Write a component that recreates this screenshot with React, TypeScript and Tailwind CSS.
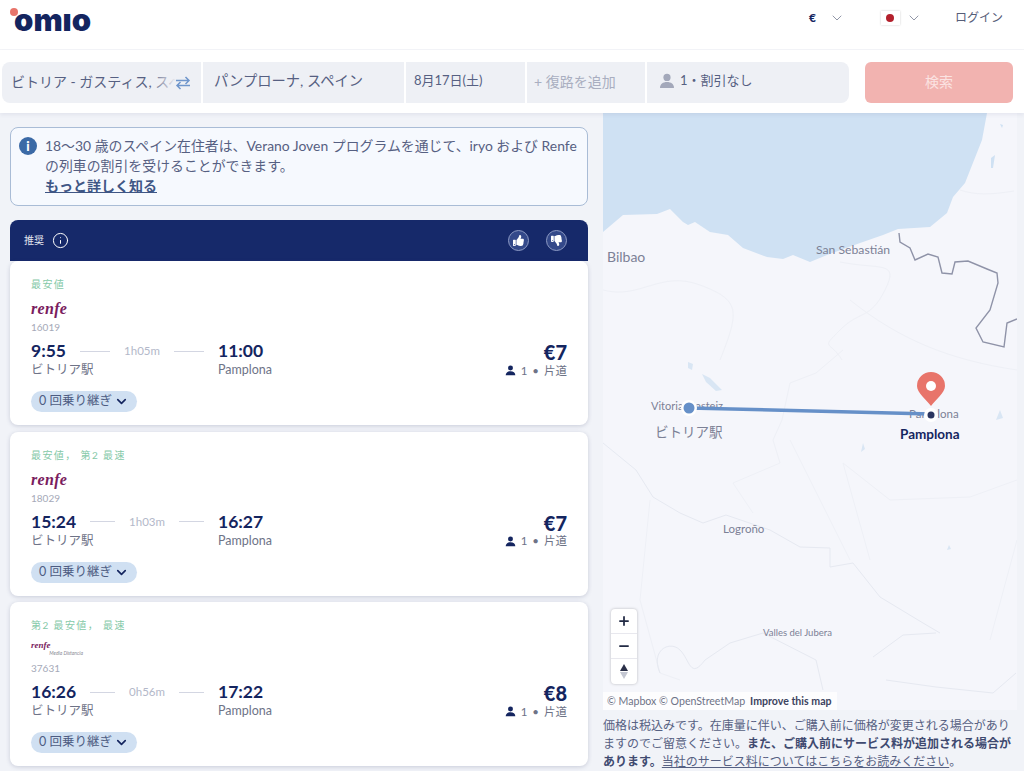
import React from "react";
import { ChevronDown, Info, Plus, Minus } from "lucide-react";
import { FaThumbsUp, FaThumbsDown } from "react-icons/fa";

const font = "[font-family:Lato,'Noto_Sans_CJK_JP',sans-serif]";

function Person({ className }: { className: string }) {
  return (
    <svg viewBox="0 0 16 16" className={className} fill="currentColor">
      <circle cx="8" cy="4.4" r="3.6" />
      <path d="M1 15c0-4 3-6 7-6s7 2 7 6z" />
    </svg>
  );
}

function Field({ w, children, className = "" }: { w: string; children: React.ReactNode; className?: string }) {
  return <div className={`${w} relative flex h-full shrink-0 items-center overflow-hidden bg-[#eef0f5] pb-[3px] ${className}`}>{children}</div>;
}

const cards = [
  { label: "最安値", no: "16019", dep: "9:55", dur: "1h05m", arr: "11:00", price: "€7", md: false },
  { label: "最安値， 第2 最速", no: "18029", dep: "15:24", dur: "1h03m", arr: "16:27", price: "€7", md: false },
  { label: "第2 最安値， 最速", no: "37631", dep: "16:26", dur: "0h56m", arr: "17:22", price: "€8", md: true },
];

function Card({ c }: { c: (typeof cards)[number] }) {
  return (
    <div className="flex h-[164px] flex-col rounded-lg bg-white pl-[21px] pr-[21px] pt-[16px] shadow-[0_1px_4px_rgba(60,70,110,0.22)]">
      <div className="h-[14px] text-[10px] leading-[14px] tracking-[1.4px] text-[#85c9a8]">{c.label}</div>
      <div className="mt-[7px] flex h-[22px] items-center">
        {c.md ? (
          <div className="relative flex h-full w-[52px] flex-col">
            <span className="text-[9px] font-bold italic leading-[12px] text-[#7a1c5e] [font-family:'Liberation_Serif',serif]">renfe</span>
            <span className="self-end text-[5px] italic leading-[5px] text-[#8a8a95]">Media Distancia</span>
          </div>
        ) : (
          <span className="text-[16px] font-bold italic leading-[22px] tracking-[0.3px] text-[#7a1c5e] [font-family:'Liberation_Serif',serif]">renfe</span>
        )}
      </div>
      <div className="mt-[1px] h-[13px] text-[10px] leading-[13px] text-[#a5a9b8]">{c.no}</div>
      <div className="mt-[6px] flex items-start justify-between">
        <div className="w-[250px]">
          <div className="flex h-[22px] items-center">
            <div className="flex w-[187px] items-center text-[11.5px] text-[#b3b8c9]">
              <span className="text-[17.5px] font-bold leading-[22px] text-[#14255f]">{c.dep}</span>
              <span className="mx-[14px] h-px min-w-0 flex-1 bg-[#d3d6e2]" />
              <span>{c.dur}</span>
              <span className="mx-[14px] h-px min-w-0 flex-1 bg-[#d3d6e2]" />
            </div>
            <span className="text-[17.5px] font-bold leading-[22px] text-[#14255f]">{c.arr}</span>
          </div>
          <div className="flex h-[15px] items-center text-[12.5px] leading-[15px] text-[#6e7387]">
            <span className="w-[187px]">ビトリア駅</span>
            <span>Pamplona</span>
          </div>
        </div>
        <div className="flex flex-col items-end pt-[1px]">
          <span className="text-[20px] font-black leading-[22px] text-[#14255f]">{c.price}</span>
          <div className="flex h-[15px] items-center gap-[5px] text-[11.5px] text-[#6e7387]">
            <Person className="h-[11px] w-[11px] text-[#14255f]" />
            <span>1</span>
            <span>•</span>
            <span>片道</span>
          </div>
        </div>
      </div>
      <div className="mt-[13px] flex h-[21px] w-[106px] items-center justify-center gap-[2px] rounded-full bg-[#d0e0f2] text-[12.5px] text-[#4d5c82]">
        <span>0 回乗り継ぎ</span>
        <ChevronDown className="h-[15px] w-[15px] text-[#14255f]" strokeWidth={2.6} />
      </div>
    </div>
  );
}

function MapArt() {
  const sans = "Lato, 'Noto Sans CJK JP', sans-serif";
  return (
    <svg viewBox="603 113 414 597" className="absolute inset-0 h-full w-full">
      <rect x="603" y="113" width="414" height="597" fill="#f5f6fb" />
      <path
        d="M603 113 L987 113 L982 140 L965 183 L953 197 L947 213 L930 227 L898 229 L883 235 L860 243 L827 255 L810 262 L793 255 L783 259 L767 257 L743 248 L728 235 L710 232 L695 222 L688 225 L683 222 L670 209 L657 214 L623 215 L603 232 Z"
        fill="#cfe1f3"
      />
      <g fill="none" stroke="#eef0f6" strokeWidth="1">
        <path d="M603 290 C640 300 660 270 700 285 S740 310 720 360" />
        <path d="M840 262 C880 270 900 260 885 290 S860 310 840 330 S830 340 842 360" />
        <path d="M843 350 L816 373 L790 383 L782 420 L773 440 L780 463 L733 483 L753 513" />
        <path d="M843 463 L890 500 L970 497 L1017 480 M843 463 L870 560 M790 440 L850 560" />
        <path d="M960 190 C975 195 990 195 1014 191 M850 300 C900 340 950 360 1017 370" />
        <path d="M650 500 L640 600 L660 673 L680 680 M1017 540 L990 640" />
      </g>
      <g fill="none" stroke="#e6e9f1" strokeWidth="1">
        <path d="M603 443 L636 470 L653 497 L680 513 L703 523 L726 515 L770 530 L800 547 L830 548 L830 567 L853 563 L880 597 L923 623 L940 633" />
        <path d="M660 673 C650 650 670 640 680 650 S690 680 705 660 L730 643 L763 633 L816 660 L823 690" />
        <path d="M873 657 L903 635 L936 633 M886 680 L936 687 L993 693 L1016 673" />
      </g>
      <path d="M702 374 L710 378 L722 390 L716 391 L706 382 Z M688 362 L693 364 L692 370 L688 368 Z M863 443 L865 449 L861 452 Z M1000 410 L1003 418 L996 420 Z M949 545 L951 549 L947 550 Z" fill="#d9e6f4" />
      <path d="M991 158 L995 155 L993 168 L991 168 Z M1000 124 l3 1 -1 3z" fill="#cfe1f3" />
      <path
        d="M899 233 L900 242 L910 248 L915 260 L928 254 L938 257 L942 273 L952 274 L955 262 L968 261 L987 269 L997 273 L998 283 L990 310 L976 328 L983 342 L1004 347 L1007 323 L1017 319"
        fill="none"
        stroke="#8f93a8"
        strokeWidth="1.4"
      />
      <g fontFamily={sans} fill="#7c8196">
        <text x="607" y="262" fontSize="14">Bilbao</text>
        <text x="816" y="254" fontSize="12.2">San Sebastián</text>
        <text x="723" y="533" fontSize="11.5">Logroño</text>
        <text x="763" y="636" fontSize="9.5">Valles del Jubera</text>
        <text x="651" y="410" fontSize="11">Vitoria-Gasteiz</text>
        <text x="909" y="418" fontSize="11.5">Pamplona</text>
        <text x="655" y="437" fontSize="13.5">ビトリア駅</text>
      </g>
      <text x="900" y="439" fontSize="13.5" fontWeight="700" fontFamily={sans} fill="#14255f">Pamplona</text>
      <line x1="689" y1="408" x2="931" y2="414" stroke="#6690c8" strokeWidth="3.5" />
      <circle cx="689" cy="408" r="8" fill="#ffffff" />
      <circle cx="689" cy="408" r="5.5" fill="#6690c8" />
      <circle cx="931" cy="415" r="7" fill="#ffffff" />
      <circle cx="931" cy="415" r="3.5" fill="#2b3660" />
      <path d="M931 406 C926 399 917 393 917 386 A14 14 0 0 1 945 386 C945 393 936 399 931 406 Z" fill="#e8746a" />
      <circle cx="931" cy="386" r="5" fill="#ffffff" />
    </svg>
  );
}

export default function App() {
  return (
    <div className={`${font} h-[771px] w-[1024px] overflow-hidden bg-[#f1f3f8]`}>
      <header className="flex h-[50px] items-start justify-between border-b border-[#f4f5f8] bg-white pl-[14px] pr-[21px]">
        <div className="relative h-[40px] w-[80px]">
          <span className="absolute left-0 top-0 text-[31px] font-black leading-[40px] text-[#14255f] [font-family:Inter,sans-serif]">omıo</span>
          <span className="absolute left-[-4px] top-[8px] h-[8px] w-[8px] rounded-full bg-[#e8746a]" />
        </div>
        <div className="flex h-[36px] items-center text-[#6a7088]">
          <span className="text-[12px] font-black text-[#14255f]">€</span>
          <ChevronDown className="ml-[13px] h-[16px] w-[16px]" strokeWidth={1.1} />
          <span className="ml-[36px] flex h-[14px] w-[19px] items-center justify-center bg-white shadow-[0_0_2px_rgba(0,0,0,0.2)]">
            <span className="h-[8px] w-[8px] rounded-full bg-[#b3202c]" />
          </span>
          <ChevronDown className="ml-[6px] h-[16px] w-[16px]" strokeWidth={1.1} />
          <span className="ml-[33px] text-[12px] text-[#565d78]">ログイン</span>
        </div>
      </header>
      <div className="relative z-10 flex h-[63px] items-start bg-white pl-[2px] pt-[12px] shadow-[0_2px_4px_rgba(60,70,110,0.08)]">
        <div className="flex h-[41px] gap-[2px]">
          <Field w="w-[199px]" className="rounded-l-lg pl-[9px] text-[14px] text-[#566082]">
            <span className="whitespace-nowrap">ビトリア - ガスティス, スペイン</span>
            <span className="absolute right-0 top-0 flex h-full w-[50px] items-center justify-end bg-gradient-to-r from-transparent via-[#eef0f5] to-[#eef0f5] pr-[10px]">
              <svg viewBox="0 0 16 14" className="h-[14px] w-[16px]" fill="none" stroke="#6f96cc" strokeWidth="1.5">
                <path d="M1 4.5h13M10.5 1L14 4.5 10.5 8" />
                <path d="M15 9.5H2M5.5 6L2 9.5 5.5 13" />
              </svg>
            </span>
          </Field>
          <Field w="w-[201px]" className="pl-[11px] text-[14.3px] text-[#566082]">パンプローナ, スペイン</Field>
          <Field w="w-[119px]" className="pl-[8px] text-[13px] text-[#566082]">8月17日(土)</Field>
          <Field w="w-[118px]" className="pl-[7px] text-[14px] text-[#a9aec0]">+ 復路を追加</Field>
          <Field w="w-[202px]" className="rounded-r-lg pl-[12px] text-[13px] text-[#566082]">
            <Person className="h-[16px] w-[16px] text-[#a3a8ba]" />
            <span className="ml-[5px]">1・割引なし</span>
          </Field>
        </div>
        <div className="ml-[16px] flex h-[41px] w-[148px] items-center justify-center rounded-md bg-[#f2b3b0] pb-[3px] text-[14px] text-[#fbe3e2]">検索</div>
      </div>
      <main className="flex">
        <section className="ml-[10px] flex w-[578px] flex-col pt-[14px]">
          <div className="flex h-[79px] gap-[8px] rounded-lg border border-[#a9bcd6] bg-[#f6f9fe] pl-[8px] pr-[8px] pt-[8px]">
            <span className="mt-[1px] flex h-[18px] w-[18px] shrink-0 items-center justify-center rounded-full bg-[#3b6aa6] text-white">
              <span className="text-[13px] font-black leading-none">i</span>
            </span>
            <div className="text-[13.9px] leading-[20px] text-[#566082]">
              <div className="whitespace-nowrap">18〜30 歳のスペイン在住者は、Verano Joven プログラムを通じて、iryo および Renfe</div>
              <div>の列車の割引を受けることができます。</div>
              <div className="text-[14px] font-bold text-[#3f5685] underline">もっと詳しく知る</div>
            </div>
          </div>
          <div className="mt-[14px] flex h-[41px] items-center rounded-t-lg bg-[#16296a] pl-[14px] pr-[21px]">
            <span className="text-[10px] text-[#e4e7f0]">推奨</span>
            <Info className="ml-[8px] h-[17px] w-[17px] text-white" strokeWidth={1.4} />
            <span className="ml-auto flex h-[21px] w-[21px] items-center justify-center rounded-full border border-[#8d9ac4] bg-[#34498a] text-white">
              <FaThumbsUp className="h-[11px] w-[11px]" />
            </span>
            <span className="ml-[17px] flex h-[21px] w-[21px] items-center justify-center rounded-full border border-[#8d9ac4] bg-[#34498a] text-white">
              <FaThumbsDown className="h-[11px] w-[11px]" />
            </span>
          </div>
          <div className="flex flex-col gap-[6.5px]">
            {cards.map((c) => (
              <Card key={c.no} c={c} />
            ))}
          </div>
        </section>
        <section className="ml-[15px] flex w-[414px] flex-col">
          <div className="relative h-[597px] w-[414px]">
            <MapArt />
            <div className="absolute left-[8px] top-[496px] flex w-[26px] flex-col rounded-[4px] bg-white shadow-[0_0_3px_rgba(0,0,0,0.25)]">
              <div className="flex h-[25px] items-center justify-center border-b border-[#e8e8ee]">
                <Plus className="h-[14px] w-[14px] text-[#222a44]" strokeWidth={3} />
              </div>
              <div className="flex h-[25px] items-center justify-center border-b border-[#e8e8ee]">
                <Minus className="h-[14px] w-[14px] text-[#222a44]" strokeWidth={3} />
              </div>
              <div className="flex h-[25px] flex-col items-center justify-center gap-[1px]">
                <span className="h-0 w-0 border-x-[4px] border-b-[7px] border-x-transparent border-b-[#2b3048]" />
                <span className="h-0 w-0 border-x-[4px] border-t-[7px] border-x-transparent border-t-[#c4c7d2]" />
              </div>
            </div>
            <div className="absolute bottom-0 left-0 flex h-[18px] w-[234px] items-center gap-[5px] bg-white/80 pl-[4px] pt-[1px] text-[10.6px] whitespace-nowrap text-[#6e7387]">
              <span>© Mapbox © OpenStreetMap</span>
              <span className="font-bold text-[#3c4360]">Improve this map</span>
            </div>
          </div>
          <p className="mt-[7px] text-[12px] leading-[18px] text-[#566082]">
            価格は税込みです。在庫量に伴い、ご購入前に価格が変更される場合がありますのでご留意ください。
            <b className="text-[#3f4a70]">また、ご購入前にサービス料が追加される場合があります。</b>
            <span className="underline">当社のサービス料についてはこちらをお読みください</span>。
          </p>
        </section>
      </main>
    </div>
  );
}
